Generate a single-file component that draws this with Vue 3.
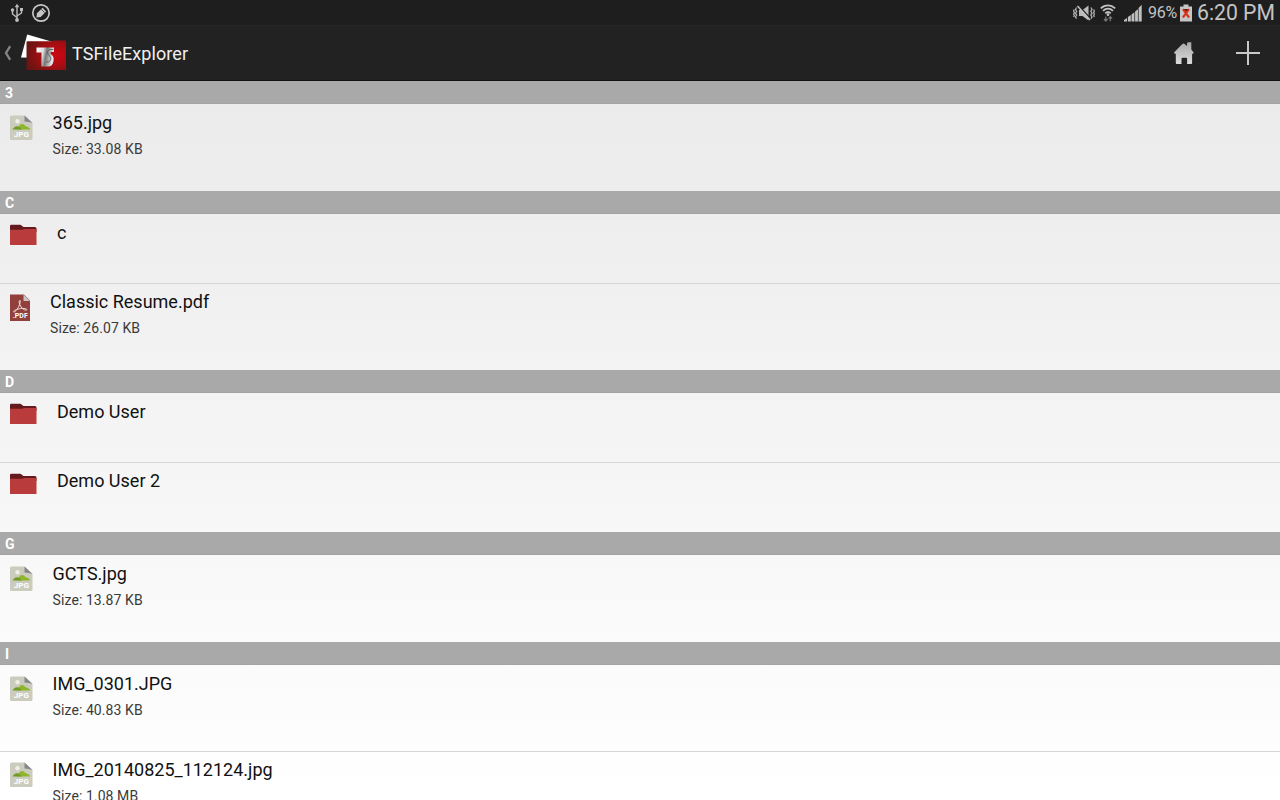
<template>
  <div class="screen">
    <header class="top">
      <div class="status-bar">
        <div class="status-left">
          <svg class="usb" width="14" height="20" viewBox="0 0 14 20">
            <g fill="none" stroke="#bdbdbd" stroke-width="1.4">
              <path d="M7 3v14M7 14.5L2.5 11V7.5M7 13l4.500-3V6.500" />
            </g>
            <path d="M7 .8L9.300 4.200H4.700z" fill="#bdbdbd" />
            <circle cx="7" cy="17" r="1.900" fill="#bdbdbd" />
            <circle cx="2.500" cy="7" r="1.700" fill="#bdbdbd" />
            <path d="M10 5h3v3h-3z" fill="#bdbdbd" />
          </svg>
          <svg class="pen" width="20" height="20" viewBox="0 0 20 20">
            <circle cx="10" cy="10" r="8.200" fill="none" stroke="#c6c6c6" stroke-width="1.700" />
            <path d="M5.400 14.600l.6-4.400L11.500 4.800l3.700 3.700-5.500 5.400z" fill="#c6c6c6" />
            <path d="M10.200 6.200l3.600 3.600" stroke="#1e1e1e" stroke-width=".7" />
          </svg>
        </div>
        <div class="status-right">
          <svg class="mute" width="22" height="16" viewBox="0 0 22 16">
            <path d="M6 5h3.500L15.500 .5v15l-6-4.500H6z" fill="#bbb" />
            <path d="M5.500 .3L18 14.200" stroke="#202020" stroke-width="1.500" />
            <path d="M4.500 1L17 14.900" stroke="#c4c4c4" stroke-width="1.500" />
            <g fill="none" stroke="#b0b0b0" stroke-width="1.300">
              <path d="M3.500 2.500L2.500 4.500l1.200 1.800-1.200 1.900 1.200 1.900-1.200 1.900 1 1.600M1.200 4.500L.6 6l.8 1.500L.6 9l.8 1.500-.8 1.500" />
              <path d="M18 2.500l1 2-1.200 1.800L19 8.200l-1.200 1.900L19 12l-1 1.600M20.600 4.500l.8 1.500-.8 1.500.8 1.500-.8 1.500.8 1.500" />
            </g>
          </svg>
          <svg class="wifi" width="16" height="18" viewBox="0 0 16 18">
            <g fill="none" stroke="#c0c0c0" stroke-width="1.800">
              <path d="M.8 4.300C5 .3 11 .3 15.200 4.300M3 6.900c3-2.900 7-2.900 10 0M5.200 9.300c1.700-1.600 3.900-1.600 5.600 0" />
            </g>
            <circle cx="8" cy="10.700" r="1.400" fill="#c0c0c0" />
            <path d="M5.800 12.500v4.300M4 15l1.800 2L7.600 15M10.300 17.300V13M8.500 14.600l1.800-2 1.800 2" fill="none" stroke="#777" stroke-width="1.200" />
          </svg>
          <svg class="signal" width="18" height="18" viewBox="0 0 18 18">
            <path d="M0 17.500v-1.500l3-2v3.500zM3.900 17.500v-4.500l2.900-2v6.500zM7.500 17.500v-7l2.900-2.200v9.200zM11.100 17.500V7.400l2.800-2.200v12.300zM14.600 17.500V4L17.700.8v16.700z" fill="#c0c0c0" />
          </svg>
          <span class="percent">96%</span>
          <svg class="battery" width="12" height="18" viewBox="0 0 12 18">
            <path d="M3.500 .5h5v2H12v15H0v-15h3.500z" fill="#c6c6c6" />
            <path d="M3.200 5h5.600L6 9z" fill="#4d1b12" />
            <path d="M2.900 5.200l6.200 8.300M9.100 5.200l-6.200 8.300" stroke="#d5341c" stroke-width="2.100" />
          </svg>
          <span class="clock">6:20 PM</span>
        </div>
      </div>

      <div class="action-bar">
        <svg class="back" width="8" height="16" viewBox="0 0 8 16">
          <path d="M7.200 1.200L3 8l4.200 6.800" fill="none" stroke="#858585" stroke-width="2.300" />
        </svg>
        <svg class="logo" width="46" height="38" viewBox="0 0 46 38">
          <defs>
            <radialGradient id="logoRed" cx=".75" cy=".5" r=".75">
              <stop offset="0" stop-color="#cd0712" />
              <stop offset=".5" stop-color="#a80d12" />
              <stop offset="1" stop-color="#6b1512" />
            </radialGradient>
            <linearGradient id="logoSilver" x1="0" y1="0" x2="1" y2=".2">
              <stop offset="0" stop-color="#fff" />
              <stop offset=".4" stop-color="#ddd" />
              <stop offset=".6" stop-color="#777" />
              <stop offset="1" stop-color="#e8e8e8" />
            </linearGradient>
          </defs>
          <path d="M6.200 .5L32 8l-4 16-28-.5z" fill="#fff" />
          <path d="M5.500 8.500q0-1.200 1.200-1.200H31L32.500 6.500H45V36H5.500z" fill="url(#logoRed)" />
          <path d="M15.500 13.500h17.500v4.500h-2.500c-1.400 0-1.400 1.500-.2 2.500 2.300 1.600 2.700 3.800 2.200 6.500-.5 3.700-2.500 5.500-5.500 5.500h-6.500V18.500h-5z" fill="url(#logoSilver)" />
          <path d="M32.500 15.500h-3.500c-3 0-3 4.500-.8 6.200 2.300 1.600 1.800 5.300-.7 6.300h-2.500" fill="none" stroke="#555" stroke-width=".8" />
        </svg>
        <h1>TSFileExplorer</h1>
        <div class="actions">
          <svg class="home" width="22" height="24" viewBox="0 0 22 24">
            <defs>
              <linearGradient id="homeFill" x1="0" y1="0" x2="0" y2="1">
                <stop offset="0" stop-color="#a8a8a8" />
                <stop offset="1" stop-color="#dcdcdc" />
              </linearGradient>
            </defs>
            <path d="M10.500 2.500q.6 0 1.200.6l2.300 2V2.200l.8-.9h3.500v7.300l2 2.400q.8 1.200-.3 1.800h-.9v9.200q0 1-1 1h-4v-5.200q0-1-1-1h-3.600q-1 0-1 1V23H3.800q-1 0-1-1v-9.200h-1q-1.200-.6-.3-1.800l7.800-7.900q.6-.6 1.200-.6z" fill="url(#homeFill)" />
          </svg>
          <svg class="plus" width="24" height="24" viewBox="0 0 24 24">
            <path d="M12 0v24M0 12h24" stroke="#c8c8c8" stroke-width="2" />
          </svg>
        </div>
      </div>
    </header>

    <main class="list">
      <section v-for="group in groups" :key="group.letter">
        <h2>{{ group.letter }}</h2>
        <ul>
          <li v-for="item in group.items" :key="item.name" :class="['row', item.type]">
            <svg v-if="item.type === 'folder'" class="icon" width="27" height="22" viewBox="0 0 27 22">
              <path d="M0 2Q0 .8 1.200 .8h9.300L13.500 3H25q1.500 0 1.500 1.500V8H0z" fill="#651a1d" />
              <path d="M0 5.800h12L14.500 5H26.500v16H0z" fill="#ba3b3b" />
            </svg>
            <svg v-else-if="item.type === 'pdf'" class="icon" width="20" height="28" viewBox="0 0 20 28">
              <path d="M0 .5h14l6 6v20.500H0z" fill="#91403c" />
              <path d="M13.500 .5L20 7h-6.500z" fill="#c9c5c3" />
              <path d="M10 6.500c-1.500 0-1 3 .5 5.500 1.700 3 5 4.800 6.200 4 .8-1-2.500-2-6.200-1.400-4 .6-7.500 2.200-7 3.200.8 1.100 3.500-1.700 5.200-5.300C10 9.500 11 6.500 10 6.500z" fill="none" stroke="#eee0df" stroke-width="1" />
              <text x="10.300" y="24.300" text-anchor="middle" class="tag-pdf">.PDF</text>
            </svg>
            <svg v-else class="icon" width="23" height="26" viewBox="0 0 23 26">
              <path d="M1.500 .5h13l8 7.500v15.500q0 1.500-1.500 1.500H1.500Q0 25 0 23.500V2Q0 .5 1.500 .5z" fill="#ccccbe" />
              <path d="M14.500 .5l8 7.500q-3-1.500-8-1.500z" fill="#85858b" />
              <circle cx="7.500" cy="6.200" r="2.200" fill="#efefe5" />
              <path d="M6.500 14.500C8.500 12.500 9.500 9 12 9c2 0 2.800 1.500 4 2.500 2 .3 3.500 1.300 4.300 3z" fill="#8fb62a" />
              <path d="M2.300 14.500c1.200-1.400 2.700-3.300 4.700-3.300 2.200 0 3 1.800 5 3.300z" fill="#6f9c28" />
              <text x="11.300" y="22.300" text-anchor="middle" class="tag-jpg">JPG</text>
            </svg>
            <div class="info">
              <p class="name">{{ item.name }}</p>
              <p v-if="item.size" class="size">Size: {{ item.size }}</p>
            </div>
          </li>
        </ul>
      </section>
    </main>
  </div>
</template>

<script setup>
const groups = [
  { letter: '3', items: [{ name: '365.jpg', type: 'jpg', size: '33.08 KB' }] },
  {
    letter: 'C',
    items: [
      { name: 'c', type: 'folder' },
      { name: 'Classic Resume.pdf', type: 'pdf', size: '26.07 KB' }
    ]
  },
  {
    letter: 'D',
    items: [
      { name: 'Demo User', type: 'folder' },
      { name: 'Demo User 2', type: 'folder' }
    ]
  },
  { letter: 'G', items: [{ name: 'GCTS.jpg', type: 'jpg', size: '13.87 KB' }] },
  {
    letter: 'I',
    items: [
      { name: 'IMG_0301.JPG', type: 'jpg', size: '40.83 KB' },
      { name: 'IMG_20140825_112124.jpg', type: 'jpg', size: '1.08 MB' }
    ]
  }
]
</script>

<style>
body {
  margin: 0;
  overflow: hidden;
}
</style>

<style scoped>
.screen {
  display: flex;
  flex-direction: column;
  height: 800px;
  overflow: hidden;
  background: linear-gradient(#e8e8e8, #fff);
  font-family: Roboto, sans-serif;
  color: #111;
}

.top {
  flex: none;
  height: 81px;
  background: #222;
}

.status-bar {
  display: flex;
  justify-content: space-between;
  height: 25px;
  background: #1e1e1e;
  border-bottom: 1px solid #262626;
}

.status-left,
.status-right {
  display: flex;
  align-items: center;
}

.status-left {
  gap: 7px;
  padding-left: 10px;
}

.status-right {
  padding-right: 6px;
  color: #c4c4c4;
}

.wifi {
  margin-left: 5px;
}

.signal {
  margin-left: 8px;
}

.percent {
  margin-left: 6px;
  width: 32px;
  font-size: 16px;
  line-height: 27px;
  letter-spacing: -0.2px;
  white-space: nowrap;
}

.clock {
  margin-left: 5px;
  width: 77px;
  font-size: 21.2px;
  line-height: 26px;
  white-space: nowrap;
}

.action-bar {
  display: flex;
  align-items: center;
  height: 54px;
  padding-left: 3px;
  border-bottom: 1px solid #111;
}

.logo {
  margin-left: 10px;
}

h1 {
  margin: 0 0 0 5px;
  font-size: 18px;
  font-weight: 400;
  letter-spacing: 0.08px;
  color: #f0f0f0;
}

.actions {
  display: flex;
  align-items: center;
  gap: 41px;
  margin-left: auto;
  padding-right: 20px;
}

h2 {
  box-sizing: border-box;
  height: 23px;
  margin: 0;
  padding-left: 5px;
  background: #a9a9a9;
  border-bottom: 1px solid #a3a3a3;
  color: #fff;
  font-size: 14px;
  font-weight: 700;
  line-height: 24px;
}

ul {
  margin: 0;
  padding: 0;
  list-style: none;
}

.row {
  box-sizing: border-box;
  display: flex;
  align-items: flex-start;
  gap: 20px;
  height: 86.8px;
  padding: 8px 10px 0;
  border-top: 1px solid #d6d6d6;
}

.row:first-child {
  border-top-color: transparent;
}

.row.folder {
  height: 69.4px;
}

.row.jpg {
  gap: 19.6px;
}

.icon {
  flex: none;
  margin-top: 1.5px;
}

.jpg .icon {
  margin-top: 2px;
}

p {
  margin: 0;
  white-space: nowrap;
}

.name {
  font-size: 18px;
  line-height: 20px;
}

.size {
  margin-top: 7px;
  font-size: 14px;
  line-height: 18px;
  letter-spacing: 0.08px;
  color: #3a3a3a;
}

.tag-jpg {
  font-size: 8px;
  font-weight: 700;
  fill: #fff;
}

.tag-pdf {
  font-size: 7px;
  font-weight: 700;
  fill: #fff;
}
</style>
